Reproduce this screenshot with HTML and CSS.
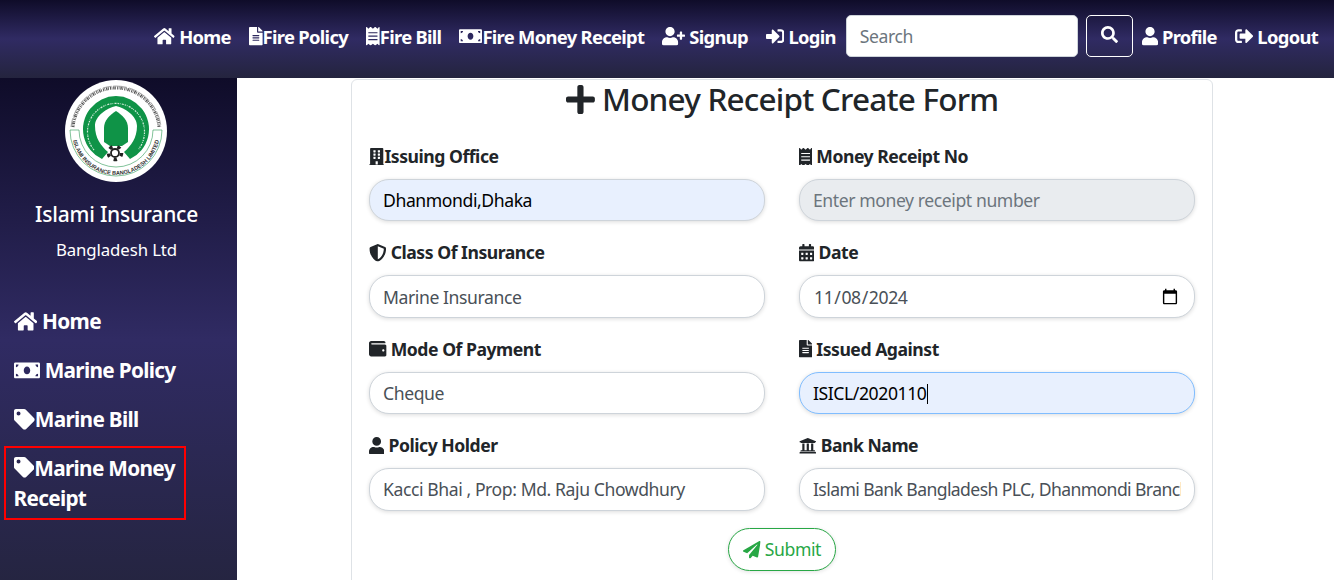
FILE: index.html
```html
<!DOCTYPE html>
<html lang="en">
<head>
    <meta charset="UTF-8">
    <meta name="viewport" content="width=device-width, initial-scale=1.0">
    <title>Money Receipt Create Form</title>
    <link rel="stylesheet" href="styles.css">
</head>
<body>
    <svg class="sprite" aria-hidden="true">
        <symbol id="i-home" viewBox="0 0 576 512"><path d="M280.37 148.26L96 300.11V464a16 16 0 0 0 16 16l112.06-.29a16 16 0 0 0 15.92-16V368a16 16 0 0 1 16-16h64a16 16 0 0 1 16 16v95.64a16 16 0 0 0 16 16.05L464 480a16 16 0 0 0 16-16V300L295.67 148.26a12.19 12.19 0 0 0-15.3 0zM571.6 251.47L488 182.56V44.05a12 12 0 0 0-12-12h-56a12 12 0 0 0-12 12v72.61L318.47 43a48 48 0 0 0-61 0L4.34 251.47a12 12 0 0 0-1.6 16.9l25.5 31A12 12 0 0 0 45.15 301l235.22-193.74a12.19 12.19 0 0 1 15.3 0L530.9 301a12 12 0 0 0 16.9-1.6l25.5-31a12 12 0 0 0-1.7-16.93z"/></symbol>
        <symbol id="i-file" viewBox="0 0 384 512"><path d="M224 136V0H24C10.7 0 0 10.7 0 24v464c0 13.3 10.7 24 24 24h336c13.3 0 24-10.7 24-24V160H248c-13.2 0-24-10.8-24-24zm64 236c0 6.6-5.4 12-12 12H108c-6.6 0-12-5.4-12-12v-8c0-6.6 5.4-12 12-12h168c6.6 0 12 5.4 12 12v8zm0-64c0 6.6-5.4 12-12 12H108c-6.6 0-12-5.4-12-12v-8c0-6.6 5.4-12 12-12h168c6.6 0 12 5.4 12 12v8zm0-72v8c0 6.6-5.4 12-12 12H108c-6.6 0-12-5.4-12-12v-8c0-6.6 5.4-12 12-12h168c6.6 0 12 5.4 12 12zm96-114.1v6.1H256V0h6.1c6.4 0 12.5 2.5 17 7l97.9 98c4.5 4.5 7 10.6 7 16.9z"/></symbol>
        <symbol id="i-receipt" viewBox="0 0 384 512"><path d="M358.4 3.2L320 48 265.6 3.2a15.9 15.9 0 0 0-19.2 0L192 48 137.6 3.2a15.9 15.9 0 0 0-19.2 0L64 48 25.6 3.2C15-4.7 0 2.8 0 16v480c0 13.2 15 20.7 25.6 12.8L64 464l54.4 44.8a15.9 15.9 0 0 0 19.2 0L192 464l54.4 44.8a15.9 15.9 0 0 0 19.2 0L320 464l38.4 44.8c10.5 7.9 25.6.4 25.6-12.8V16c0-13.2-15-20.7-25.6-12.8zM320 360c0 4.4-3.6 8-8 8H72c-4.4 0-8-3.6-8-8v-16c0-4.4 3.6-8 8-8h240c4.4 0 8 3.6 8 8v16zm0-96c0 4.4-3.6 8-8 8H72c-4.4 0-8-3.6-8-8v-16c0-4.4 3.6-8 8-8h240c4.4 0 8 3.6 8 8v16zm0-96c0 4.4-3.6 8-8 8H72c-4.4 0-8-3.6-8-8v-16c0-4.4 3.6-8 8-8h240c4.4 0 8 3.6 8 8v16z"/></symbol>
        <symbol id="i-money" viewBox="0 0 640 512"><path d="M608 64H32C14.33 64 0 78.33 0 96v320c0 17.67 14.33 32 32 32h576c17.67 0 32-14.33 32-32V96c0-17.67-14.33-32-32-32zM48 400v-64c35.35 0 64 28.65 64 64H48zm0-224v-64h64c0 35.35-28.65 64-64 64zm272 176c-44.19 0-80-42.99-80-96 0-53.02 35.82-96 80-96s80 42.98 80 96c0 53.03-35.83 96-80 96zm272 48h-64c0-35.35 28.65-64 64-64v64zm0-224c-35.35 0-64-28.65-64-64h64v64z"/></symbol>
        <symbol id="i-user-plus" viewBox="0 0 640 512"><path d="M624 208h-64v-64c0-8.8-7.2-16-16-16h-32c-8.8 0-16 7.2-16 16v64h-64c-8.8 0-16 7.2-16 16v32c0 8.8 7.2 16 16 16h64v64c0 8.8 7.2 16 16 16h32c8.8 0 16-7.2 16-16v-64h64c8.8 0 16-7.2 16-16v-32c0-8.8-7.2-16-16-16zm-400 48c70.7 0 128-57.3 128-128S294.7 0 224 0 96 57.3 96 128s57.3 128 128 128zm89.6 32h-16.7c-22.2 10.2-46.9 16-72.9 16s-50.6-5.8-72.9-16h-16.7C60.2 288 0 348.2 0 422.4V464c0 26.5 21.5 48 48 48h352c26.5 0 48-21.5 48-48v-41.6c0-74.2-60.2-134.4-134.4-134.4z"/></symbol>
        <symbol id="i-sign-in" viewBox="0 0 512 512"><path d="M416 448h-84c-6.6 0-12-5.4-12-12v-40c0-6.6 5.4-12 12-12h84c17.7 0 32-14.3 32-32V160c0-17.7-14.3-32-32-32h-84c-6.6 0-12-5.4-12-12V76c0-6.6 5.4-12 12-12h84c53 0 96 43 96 96v192c0 53-43 96-96 96zm-47-201L201 79c-15-15-41-4.5-41 17v96H24c-13.3 0-24 10.7-24 24v96c0 13.3 10.7 24 24 24h136v96c0 21.5 26 32 41 17l168-168c9.3-9.4 9.3-24.6 0-34z"/></symbol>
        <symbol id="i-sign-out" viewBox="0 0 512 512"><path d="M497 273L329 441c-15 15-41 4.5-41-17v-96H152c-13.3 0-24-10.7-24-24v-96c0-13.3 10.7-24 24-24h136V88c0-21.4 25.9-32 41-17l168 168c9.3 9.4 9.3 24.6 0 34zM192 436v-40c0-6.6-5.4-12-12-12H96c-17.7 0-32-14.3-32-32V160c0-17.7 14.3-32 32-32h84c6.6 0 12-5.4 12-12V76c0-6.6-5.4-12-12-12H96c-53 0-96 43-96 96v192c0 53 43 96 96 96h84c6.6 0 12-5.4 12-12z"/></symbol>
        <symbol id="i-search" viewBox="0 0 512 512"><path d="M505 442.7L405.3 343c-4.5-4.5-10.6-7-17-7H372c27.6-35.3 44-79.7 44-128C416 93.1 322.9 0 208 0S0 93.1 0 208s93.1 208 208 208c48.3 0 92.7-16.4 128-44v16.3c0 6.4 2.5 12.5 7 17l99.7 99.7c9.4 9.4 24.6 9.4 33.9 0l28.3-28.3c9.4-9.4 9.4-24.6.1-34zM208 336c-70.7 0-128-57.2-128-128 0-70.7 57.2-128 128-128 70.7 0 128 57.2 128 128 0 70.7-57.2 128-128 128z"/></symbol>
        <symbol id="i-user" viewBox="0 0 448 512"><path d="M224 256c70.7 0 128-57.3 128-128S294.7 0 224 0 96 57.3 96 128s57.3 128 128 128zm89.6 32h-16.7c-22.2 10.2-46.9 16-72.9 16s-50.6-5.8-72.9-16h-16.7C60.2 288 0 348.2 0 422.4V464c0 26.5 21.5 48 48 48h352c26.5 0 48-21.5 48-48v-41.6c0-74.2-60.2-134.4-134.4-134.4z"/></symbol>
        <symbol id="i-tag" viewBox="0 0 512 512"><path d="M0 252.118V48C0 21.49 21.49 0 48 0h204.118a48 48 0 0 1 33.941 14.059l211.882 211.882c18.745 18.745 18.745 49.137 0 67.882L293.823 497.941c-18.745 18.745-49.137 18.745-67.882 0L14.059 286.059A48 48 0 0 1 0 252.118zM112 64c-26.51 0-48 21.49-48 48s21.49 48 48 48 48-21.49 48-48-21.49-48-48-48z"/></symbol>
        <symbol id="i-plus" viewBox="0 0 448 512"><path d="M416 208H272V64c0-17.67-14.33-32-32-32h-32c-17.67 0-32 14.33-32 32v144H32c-17.67 0-32 14.33-32 32v32c0 17.67 14.33 32 32 32h144v144c0 17.67 14.33 32 32 32h32c17.67 0 32-14.33 32-32V304h144c17.67 0 32-14.33 32-32v-32c0-17.67-14.33-32-32-32z"/></symbol>
        <symbol id="i-building" viewBox="0 0 448 512"><path d="M436 480h-20V24c0-13.255-10.745-24-24-24H56C42.745 0 32 10.745 32 24v456H12c-6.627 0-12 5.373-12 12v20h448v-20c0-6.627-5.373-12-12-12zM128 76c0-6.627 5.373-12 12-12h40c6.627 0 12 5.373 12 12v40c0 6.627-5.373 12-12 12h-40c-6.627 0-12-5.373-12-12V76zm0 96c0-6.627 5.373-12 12-12h40c6.627 0 12 5.373 12 12v40c0 6.627-5.373 12-12 12h-40c-6.627 0-12-5.373-12-12v-40zm52 148h-40c-6.627 0-12-5.373-12-12v-40c0-6.627 5.373-12 12-12h40c6.627 0 12 5.373 12 12v40c0 6.627-5.373 12-12 12zm76 160h-64v-84c0-6.627 5.373-12 12-12h40c6.627 0 12 5.373 12 12v84zm64-172c0 6.627-5.373 12-12 12h-40c-6.627 0-12-5.373-12-12v-40c0-6.627 5.373-12 12-12h40c6.627 0 12 5.373 12 12v40zm0-96c0 6.627-5.373 12-12 12h-40c-6.627 0-12-5.373-12-12v-40c0-6.627 5.373-12 12-12h40c6.627 0 12 5.373 12 12v40zm0-96c0 6.627-5.373 12-12 12h-40c-6.627 0-12-5.373-12-12V76c0-6.627 5.373-12 12-12h40c6.627 0 12 5.373 12 12v40z"/></symbol>
        <symbol id="i-shield" viewBox="0 0 512 512"><path d="M466.5 83.7l-192-80a48.15 48.15 0 0 0-36.9 0l-192 80C27.7 91.1 16 108.6 16 128c0 198.5 114.5 335.7 221.5 380.3 11.8 4.9 25.1 4.9 36.9 0C360.1 472.6 496 349.3 496 128c0-19.4-11.7-36.9-29.5-44.3zM256.1 446.3l-.1-381 175.9 73.3c-3.3 151.4-82.1 261.1-175.8 307.7z"/></symbol>
        <symbol id="i-calendar" viewBox="0 0 448 512"><path d="M0 464c0 26.5 21.5 48 48 48h352c26.5 0 48-21.5 48-48V192H0v272zm320-196c0-6.6 5.4-12 12-12h40c6.6 0 12 5.4 12 12v40c0 6.6-5.4 12-12 12h-40c-6.6 0-12-5.4-12-12v-40zm0 128c0-6.6 5.4-12 12-12h40c6.6 0 12 5.4 12 12v40c0 6.6-5.4 12-12 12h-40c-6.6 0-12-5.4-12-12v-40zM192 268c0-6.6 5.4-12 12-12h40c6.6 0 12 5.4 12 12v40c0 6.6-5.4 12-12 12h-40c-6.6 0-12-5.4-12-12v-40zm0 128c0-6.6 5.4-12 12-12h40c6.6 0 12 5.4 12 12v40c0 6.6-5.4 12-12 12h-40c-6.6 0-12-5.4-12-12v-40zM64 268c0-6.6 5.4-12 12-12h40c6.6 0 12 5.4 12 12v40c0 6.6-5.4 12-12 12H76c-6.6 0-12-5.4-12-12v-40zm0 128c0-6.6 5.4-12 12-12h40c6.6 0 12 5.4 12 12v40c0 6.6-5.4 12-12 12H76c-6.6 0-12-5.4-12-12v-40zM400 64h-48V16c0-8.8-7.2-16-16-16h-32c-8.8 0-16 7.2-16 16v48H160V16c0-8.8-7.2-16-16-16h-32c-8.8 0-16 7.2-16 16v48H48C21.5 64 0 85.5 0 112v48h448v-48c0-26.5-21.5-48-48-48z"/></symbol>
        <symbol id="i-wallet" viewBox="0 0 512 512"><path d="M461.2 128H80c-8.84 0-16-7.16-16-16s7.16-16 16-16h384c8.84 0 16-7.16 16-16 0-26.51-21.49-48-48-48H64C28.65 32 0 60.65 0 96v320c0 35.35 28.65 64 64 64h397.2c28.02 0 50.8-21.53 50.8-48V176c0-26.47-22.78-48-50.8-48zM416 336c-17.67 0-32-14.33-32-32s14.33-32 32-32 32 14.33 32 32-14.33 32-32 32z"/></symbol>
        <symbol id="i-bank" viewBox="0 0 512 512"><path d="M496 128v16a8 8 0 0 1-8 8h-24v12c0 6.627-5.373 12-12 12H60c-6.627 0-12-5.373-12-12v-12H24a8 8 0 0 1-8-8v-16a8 8 0 0 1 4.941-7.392l232-88a7.996 7.996 0 0 1 6.118 0l232 88A8 8 0 0 1 496 128zm-24 304H40c-13.255 0-24 10.745-24 24v16a8 8 0 0 0 8 8h464a8 8 0 0 0 8-8v-16c0-13.255-10.745-24-24-24zM96 192v192H60c-6.627 0-12 5.373-12 12v20h416v-20c0-6.627-5.373-12-12-12h-36V192h-64v192h-64V192h-64v192h-64V192H96z"/></symbol>
        <symbol id="i-plane" viewBox="0 0 512 512"><path d="M476 3.2L12.5 270.6c-18.1 10.4-15.8 35.6 2.2 43.2L121 358.4l287.3-253.2c5.5-4.9 13.3 2.6 8.6 8.3L176 407v80.5c0 23.6 28.5 32.9 42.5 15.8L282 426l124.6 52.2c14.2 6 30.4-2.9 33-18.2l72-432C515 7.8 493.3-6.8 476 3.2z"/></symbol>
    </svg>

    <header class="topbar">
        <a class="top-link" href="#"><svg class="ic" viewBox="0 0 576 512"><use href="#i-home"/></svg> Home</a>
        <a class="top-link" href="#"><svg class="ic" viewBox="0 0 384 512"><use href="#i-file"/></svg>Fire Policy</a>
        <a class="top-link" href="#"><svg class="ic" viewBox="0 0 384 512"><use href="#i-receipt"/></svg>Fire Bill</a>
        <a class="top-link" href="#"><svg class="ic" viewBox="0 0 640 512"><use href="#i-money"/></svg>Fire Money Receipt</a>
        <a class="top-link" href="#"><svg class="ic" viewBox="0 0 640 512"><use href="#i-user-plus"/></svg> Signup</a>
        <a class="top-link" href="#"><svg class="ic" viewBox="0 0 512 512"><use href="#i-sign-in"/></svg> Login</a>
        <form class="search">
            <input class="search-input" type="search" placeholder="Search">
            <button class="search-btn" type="button"><svg class="ic" viewBox="0 0 512 512"><use href="#i-search"/></svg></button>
        </form>
        <a class="top-link" href="#"><svg class="ic" viewBox="0 0 448 512"><use href="#i-user"/></svg> Profile</a>
        <a class="top-link" href="#"><svg class="ic" viewBox="0 0 512 512"><use href="#i-sign-out"/></svg> Logout</a>
    </header>

    <div class="page">
        <aside class="sidebar">
            <svg class="logo" viewBox="0 0 102 102">
                <defs>
                    <path id="ring-low" d="M7 51 A44 44 0 0 0 95 51"/>
                </defs>
                <circle cx="51" cy="51" r="51" fill="#fff"/>
                <path class="logo-script" d="M8 47 A43.2 43.2 0 0 1 94 47"/>
                <path class="logo-matra" d="M6 47 A45.2 45.2 0 0 1 96 47"/>
                <path class="logo-band" d="M5 50 H14 A37 37 0 0 0 88 50 H97 A46 46 0 0 1 5 50 Z"/>
                <text class="logo-caption"><textPath href="#ring-low" startOffset="50%" text-anchor="middle">ISLAMI INSURANCE BANGLADESH LIMITED</textPath></text>
                <path class="logo-green" d="M37 79 A33 33 0 1 1 65 79 L59 72 C66 66 72 58 72 46 C72 36 60 28 51 26 C42 28 30 36 30 46 C30 58 36 66 43 72 Z"/>
                <path class="logo-ring-text" d="M29 70 A28.5 28.5 0 1 1 73 70"/>
                <path class="logo-green" d="M51 31 C57 35 63 40 63 48 V62 L57 66 H45 L39 62 V48 C39 40 45 35 51 31 Z"/>
                <circle class="logo-teeth" cx="50" cy="73" r="6.6"/>
                <circle class="logo-gear" cx="50" cy="73" r="4"/>
            </svg>
            <h1 class="brand">Islami Insurance</h1>
            <p class="brand-sub">Bangladesh Ltd</p>
            <nav class="side-nav">
                <a class="side-link" href="#"><svg class="ic" viewBox="0 0 576 512"><use href="#i-home"/></svg> Home</a>
                <a class="side-link" href="#"><svg class="ic" viewBox="0 0 640 512"><use href="#i-money"/></svg> Marine Policy</a>
                <a class="side-link" href="#"><svg class="ic" viewBox="0 0 512 512"><use href="#i-tag"/></svg>Marine Bill</a>
                <a class="side-link side-link--active" href="#"><svg class="ic" viewBox="0 0 512 512"><use href="#i-tag"/></svg>Marine Money Receipt</a>
            </nav>
        </aside>

        <main class="content">
            <div class="card">
                <h2 class="card-title"><svg class="ic ic--title" viewBox="0 0 448 512"><use href="#i-plus"/></svg> Money Receipt Create Form</h2>
                <form class="receipt-form">
                    <div class="field">
                        <label class="field-label"><svg class="ic" viewBox="0 0 448 512"><use href="#i-building"/></svg>Issuing Office</label>
                        <input class="field-input field-input--filled" type="text" value="Dhanmondi,Dhaka">
                    </div>
                    <div class="field">
                        <label class="field-label"><svg class="ic" viewBox="0 0 384 512"><use href="#i-receipt"/></svg> Money Receipt No</label>
                        <input class="field-input" type="text" placeholder="Enter money receipt number" disabled>
                    </div>
                    <div class="field">
                        <label class="field-label"><svg class="ic" viewBox="0 0 512 512"><use href="#i-shield"/></svg> Class Of Insurance</label>
                        <input class="field-input" type="text" value="Marine Insurance">
                    </div>
                    <div class="field">
                        <label class="field-label"><svg class="ic" viewBox="0 0 448 512"><use href="#i-calendar"/></svg> Date</label>
                        <input class="field-input" type="date" value="2024-11-08">
                    </div>
                    <div class="field">
                        <label class="field-label"><svg class="ic" viewBox="0 0 512 512"><use href="#i-wallet"/></svg> Mode Of Payment</label>
                        <input class="field-input" type="text" value="Cheque">
                    </div>
                    <div class="field field--focus">
                        <label class="field-label"><svg class="ic" viewBox="0 0 384 512"><use href="#i-file"/></svg> Issued Against</label>
                        <input class="field-input field-input--filled field-input--focus" type="text" value="ISICL/2020110">
                        <span class="caret"></span>
                    </div>
                    <div class="field">
                        <label class="field-label"><svg class="ic" viewBox="0 0 448 512"><use href="#i-user"/></svg> Policy Holder</label>
                        <input class="field-input" type="text" value="Kacci Bhai , Prop: Md. Raju Chowdhury">
                    </div>
                    <div class="field">
                        <label class="field-label"><svg class="ic" viewBox="0 0 512 512"><use href="#i-bank"/></svg> Bank Name</label>
                        <input class="field-input field-input--long" type="text" value="Islami Bank Bangladesh PLC, Dhanmondi Branch">
                    </div>
                    <div class="form-actions">
                        <button class="submit-btn" type="button"><svg class="ic" viewBox="0 0 512 512"><use href="#i-plane"/></svg> Submit</button>
                    </div>
                </form>
            </div>
        </main>
    </div>
</body>
</html>
```

FILE: styles.css
```css
* {
    box-sizing: border-box;
}

html, body {
    height: 100%;
    overflow: hidden;
}

body {
    margin: 0;
    background-color: #fff;
    color: #212529;
    font-family: "Noto Sans", "Open Sans", sans-serif;
}

.sprite {
    display: none;
}

.ic {
    height: 1em;
    width: auto;
    fill: currentColor;
    vertical-align: -0.125em;
}

.ic--title {
    height: 33px;
    vertical-align: -5px;
}

/* top bar */
.topbar {
    display: flex;
    align-items: center;
    justify-content: flex-end;
    gap: 18px;
    height: 78px;
    padding: 0 16px 6px 0;
    background: linear-gradient(to bottom, #0f0c29, #302b63, #24243e);
}

.top-link {
    color: #fff;
    font-size: 18.4px;
    font-weight: 700;
    letter-spacing: -0.7px;
    text-decoration: none;
    white-space: nowrap;
}

.search {
    display: flex;
    gap: 8px;
    margin: 0 -9px 0 -8px;
}

.search-input {
    width: 232px;
    height: 42px;
    padding: 6px 13px;
    border: 1px solid #ced4da;
    border-radius: 5px;
    background: #fff;
    font-family: inherit;
    font-size: 17.6px;
    letter-spacing: -0.4px;
}

.search-input::placeholder {
    color: #6c757d;
}

.search-btn {
    width: 47px;
    height: 42px;
    border: 1px solid #fff;
    border-radius: 5px;
    background: transparent;
    color: #fff;
    font-size: 17px;
}

/* sidebar */
.page {
    display: flex;
    align-items: flex-start;
}

.sidebar {
    flex: 0 0 237px;
    height: 524px;
    padding: 2px 4px 0 0;
    color: #fff;
    text-align: center;
    background: linear-gradient(to bottom, #0f0c29, #302b63, #24243e);
}

.logo {
    display: block;
    width: 102px;
    height: 102px;
    margin-left: 65px;
}

.logo-script {
    fill: none;
    stroke: #555;
    stroke-width: 3;
    stroke-dasharray: 1 .7 .6 .9 1.4 .6 .8 1.2;
}

.logo-matra {
    fill: none;
    stroke: #555;
    stroke-width: .5;
    stroke-dasharray: 9 1.6 14 2;
}

.logo-band {
    fill: #fff;
    stroke: #2e9a55;
    stroke-width: .6;
}

.logo-caption {
    font-family: "Liberation Sans", sans-serif;
    font-size: 5.6px;
    font-weight: 700;
    fill: #333;
}

.logo-green {
    fill: #0f9347;
}

.logo-ring-text {
    fill: none;
    stroke: #d5ecdc;
    stroke-width: 1.2;
    stroke-dasharray: 1.4 .9 .7 1.3 2 1;
}

.logo-teeth {
    fill: none;
    stroke: #222;
    stroke-width: 3.4;
    stroke-dasharray: 3.4 4.9;
}

.logo-gear {
    fill: #fff;
    stroke: #222;
    stroke-width: 1.8;
}

.brand {
    margin: 18px 0 0;
    font-size: 21px;
    font-weight: 500;
    line-height: 28px;
    letter-spacing: -0.2px;
}

.brand-sub {
    margin: 10px 0 0;
    font-size: 16.8px;
    line-height: 24px;
    letter-spacing: -0.1px;
}

.side-nav {
    display: flex;
    flex-direction: column;
    margin-top: 39px;
    padding-left: 4px;
    text-align: left;
}

.side-link {
    width: 182px;
    padding: 5px 7px 4px 10px;
    margin-bottom: 10px;
    color: #fff;
    font-size: 20.8px;
    font-weight: 700;
    line-height: 30px;
    letter-spacing: -0.7px;
    text-decoration: none;
}

.side-link--active {
    margin-top: -2px;
    padding: 4.5px 7px 5.5px 7.5px;
    border: 2.5px solid #f00;
}

/* form card */
.content {
    flex: 1;
    padding: 1px 0 0 114px;
}

.card {
    width: 862px;
    height: 520px;
    padding: 0 16px;
    border: 1px solid #dee2e6;
    border-radius: 6px;
}

.card-title {
    margin: 0;
    font-size: 31.5px;
    font-weight: 500;
    line-height: 38px;
    letter-spacing: -0.8px;
    text-align: center;
}

.receipt-form {
    display: grid;
    grid-template-columns: 396px 396px;
    column-gap: 34px;
    row-gap: 15px;
    margin-top: 22px;
    padding-left: 1px;
}

.field {
    position: relative;
}

.field-label {
    display: block;
    height: 39px;
    font-size: 17.6px;
    font-weight: 700;
    line-height: 32px;
    letter-spacing: -0.47px;
}

.field-input {
    display: block;
    width: 100%;
    height: 42.4px;
    padding: 6px 13px;
    border: 1px solid #ced4da;
    border-radius: 20px;
    background: #fff;
    color: #495057;
    font-family: inherit;
    font-size: 17.6px;
    letter-spacing: -0.42px;
    box-shadow: 0 1px 4px rgba(0, 0, 0, .14);
    outline: none;
}

.field-input:disabled {
    background: #e9ecef;
}

.field-input::placeholder {
    color: #6c757d;
}

.field-input--filled {
    background: #e8f0fe;
    color: #000;
}

.field-input--focus {
    border-color: #80bdff;
}

.field-input--long {
    letter-spacing: -0.6px;
}

/* text cursor of the focused field */
.caret {
    position: absolute;
    left: 128px;
    top: 51px;
    width: 1px;
    height: 20px;
    background: #000;
}

.form-actions {
    grid-column: 1 / -1;
    display: flex;
    justify-content: center;
    margin-top: 2.4px;
}

.submit-btn {
    width: 108px;
    height: 43px;
    padding: 0;
    border: 1px solid #28a745;
    border-radius: 22px;
    background: #fff;
    color: #28a745;
    font-family: inherit;
    font-size: 17.6px;
    letter-spacing: -0.4px;
    box-shadow: 0 1px 4px rgba(0, 0, 0, .12);
}
```
